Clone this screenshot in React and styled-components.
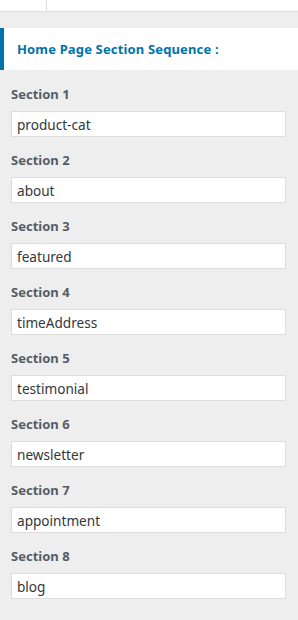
import React from "react";
import styled, { createGlobalStyle } from "styled-components";

const Global = createGlobalStyle`
  html, body { margin: 0; padding: 0; background: #eeeeee; }
  body { font-family: "Noto Sans", "Open Sans", sans-serif; }
`;

const Page = styled.div`
  width: 298px;
  min-height: 620px;
  background: #eeeeee;
`;

const TopBar = styled.div`
  height: 11px;
  background: #ffffff;
  border-bottom: 1px solid #dddddd;
  display: flex;
`;

const TopTab = styled.div`
  width: 46px;
  border-right: 1px solid #dddddd;
`;

const Header = styled.div`
  margin-top: 16px;
  height: 42px;
  background: #ffffff;
  border-left: 4px solid #0073aa;
  display: flex;
  align-items: center;
  padding-left: 13px;
  box-sizing: border-box;
`;

const Title = styled.h3`
  margin: 0;
  font-size: 13px;
  font-weight: 700;
  color: #0073aa;
  letter-spacing: 0.15px;
`;

const List = styled.div`
  display: flex;
  flex-direction: column;
  padding: 15px 12px 0 11px;
  gap: 14px;
`;

const Field = styled.label`
  display: flex;
  flex-direction: column;
  gap: 8px;
`;

const Label = styled.span`
  font-size: 13px;
  font-weight: 700;
  color: #555d66;
  line-height: 18px;
`;

const Input = styled.input`
  box-sizing: border-box;
  width: 275px;
  height: 26px;
  border: 1px solid #dddddd;
  background: #ffffff;
  padding: 0 5px;
  font-family: "Noto Sans", "Open Sans", sans-serif;
  font-size: 13.6px;
  color: #32373c;
  outline: none;
  border-radius: 0;
`;

const sections = [
  "product-cat",
  "about",
  "featured",
  "timeAddress",
  "testimonial",
  "newsletter",
  "appointment",
  "blog",
];

export default function App() {
  return (
    <Page>
      <Global />
      <TopBar>
        <TopTab />
      </TopBar>
      <Header>
        <Title>Home Page Section Sequence :</Title>
      </Header>
      <List>
        {sections.map((s, i) => (
          <Field key={s}>
            <Label>Section {i + 1}</Label>
            <Input defaultValue={s} readOnly />
          </Field>
        ))}
      </List>
    </Page>
  );
}
